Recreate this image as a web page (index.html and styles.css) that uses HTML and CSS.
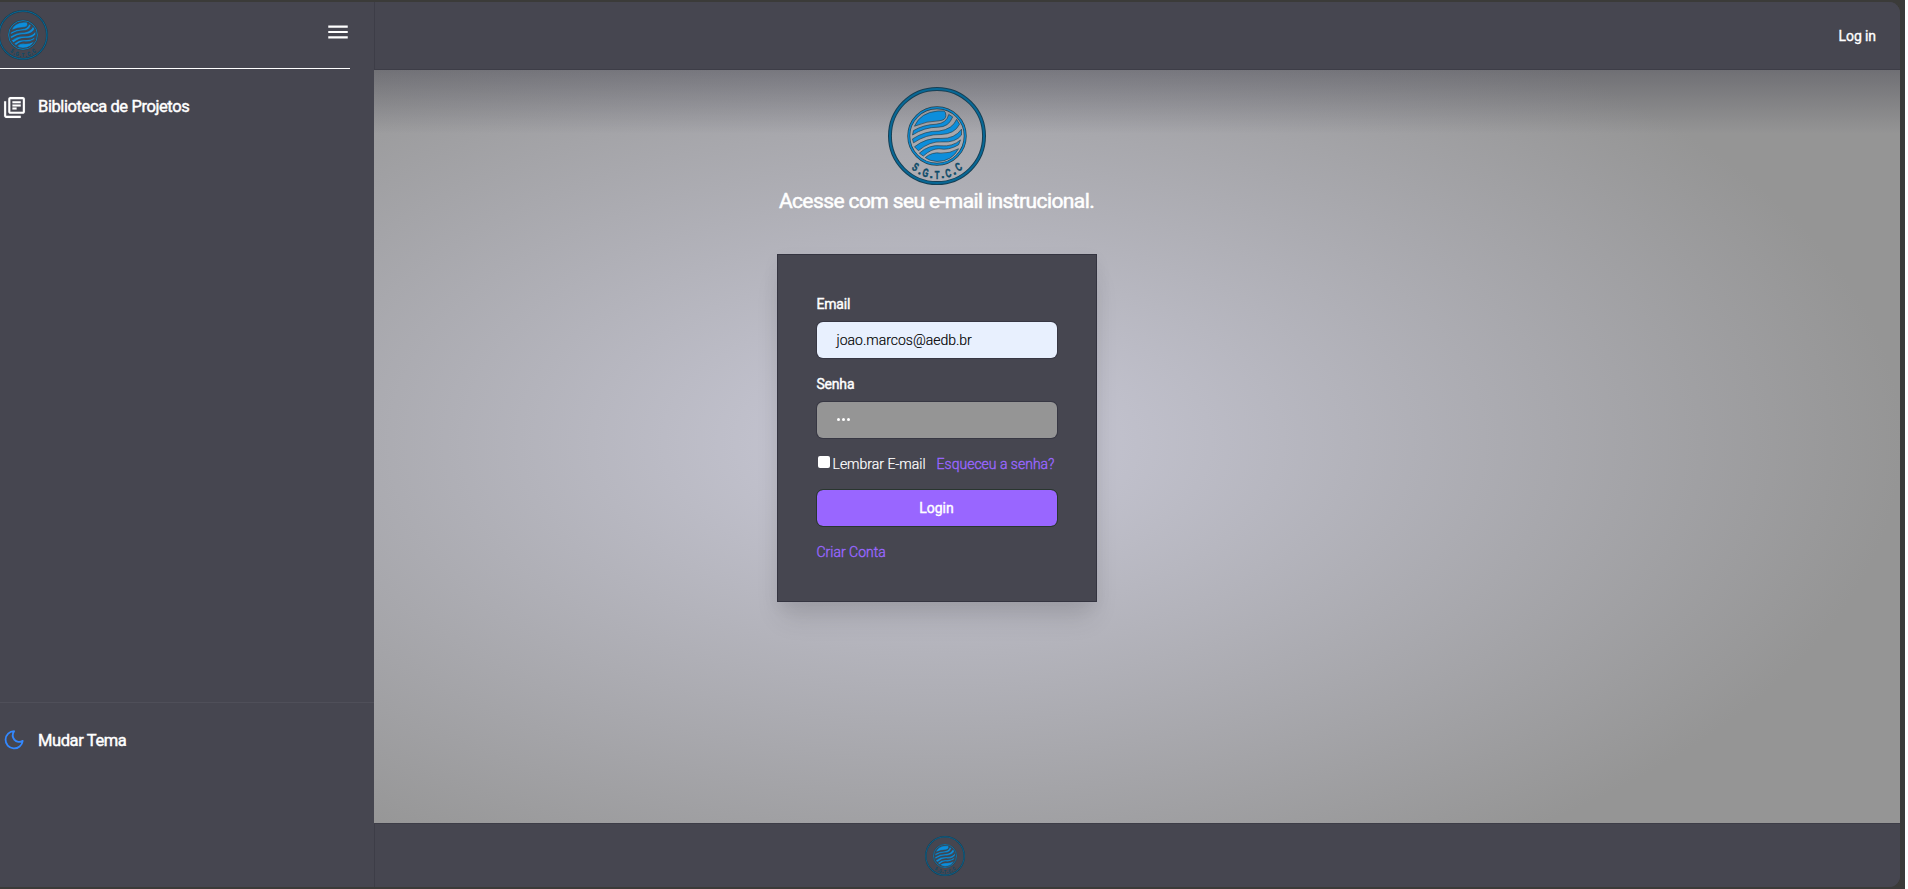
FILE: index.html
```html
<!DOCTYPE html>
<html lang="pt-BR">
<head>
<meta charset="utf-8">
<title>SGTCC</title>
<link rel="stylesheet" href="styles.css">
</head>
<body>
<svg class="defs" width="0" height="0">
  <symbol id="logo" viewBox="0 0 100 100" overflow="visible">
    <circle cx="50" cy="50" r="48" fill="none" stroke="#173f54" stroke-width="4"/>
    <circle cx="50" cy="50" r="48" fill="none" stroke="#076896" stroke-width="2"/>
    <circle cx="50" cy="50" r="28.800" fill="none" stroke="#24404d" stroke-width="3"/>
    <circle cx="50" cy="50" r="28.800" fill="none" stroke="#0b85c9" stroke-width="1.700"/>
    <g fill="#0d8edb" stroke="#24404d" stroke-width=".7">
      <path d="M27 40Q33 26 51 24.500H57Q59 25 59 29Q59 34 52 34.500Q40 34.500 27 40Z"/>
      <path d="M62 28L66 30.500Q62 41 51 41Q37 41 25 49L26 44.500Q36 38.500 49 38Q60 37 62 28Z"/>
      <path d="M70 33L73 38Q68 48 54 48.500Q39 48 26 57L25 53Q38 44.500 52 45Q66 43 70 33Z"/>
      <path d="M75 43L75 49Q69 57 55 56Q43 55 31 65L27 61Q39 51.500 54 52.500Q68 53 75 43Z"/>
      <path d="M74 54L72 59Q62 65 52 63Q44 63 36 70.500L32 67.500Q42 58.500 54 60Q66 61 74 54Z"/>
      <path d="M72 63Q65 76 50 76Q42 75.500 38 72Q45 66 54 67.500Q63 68 72 63Z"/>
    </g>
    <g class="logo-text">
      <text transform="translate(26 85) rotate(32) scale(.65 1)">S</text>
      <text transform="translate(31.500 89) rotate(24)">.</text>
      <text transform="translate(37.500 91.500) rotate(14) scale(.65 1)">G</text>
      <text transform="translate(44 93)">.</text>
      <text transform="translate(50 94) scale(.65 1)">T</text>
      <text transform="translate(56 93)">.</text>
      <text transform="translate(62.500 92) rotate(-14) scale(.65 1)">C</text>
      <text transform="translate(68.500 89) rotate(-24)">.</text>
      <text transform="translate(74 85) rotate(-32) scale(.65 1)">C</text>
    </g>
  </symbol>
</svg>
<div class="app">
  <aside class="sidebar">
    <div class="brand">
      <svg class="brand-logo"><use href="#logo"/></svg>
      <svg class="menu" viewBox="0 0 24 24"><path fill="#fff" d="M3 18h18v-2H3v2zm0-5h18v-2H3v2zm0-7v2h18V6H3z"/></svg>
    </div>
    <nav class="links">
      <a class="item">
        <svg class="icon-library" viewBox="0 0 24 24"><path fill="#fff" stroke="#fff" stroke-width=".1" d="M4 6H2v14c0 1.100.9 2 2 2h14v-2H4V6zm16-4H8c-1.100 0-2 .9-2 2v12c0 1.100.9 2 2 2h12c1.100 0 2-.9 2-2V4c0-1.100-.9-2-2-2zm0 14H8V4h12v12zM10 9h8v2h-8V9zm0 3h4v2h-4v-2zm0-6h8v2h-8V6z"/></svg>
        <span>Biblioteca de Projetos</span>
      </a>
    </nav>
    <div class="theme">
      <a class="item">
        <svg class="icon-moon" viewBox="0 0 20 20"><path fill="none" stroke="#3388ff" stroke-width="1.800" stroke-linejoin="round" d="M10.100 1.200A8.600 8.600 0 1 0 18.700 10.800A6.200 6.200 0 0 1 10.300 9.600A7.200 7.200 0 0 1 10.100 1.200Z"/></svg>
        <span>Mudar Tema</span>
      </a>
    </div>
  </aside>
  <div class="page">
    <header class="topbar"><a>Log in</a></header>
    <main class="main">
      <svg class="main-logo"><use href="#logo"/></svg>
      <h1 class="title">Acesse com seu e-mail instrucional.</h1>
      <form class="card">
        <label class="label">Email</label>
        <div class="field field-email">joao.marcos@aedb.br</div>
        <label class="label">Senha</label>
        <div class="field field-password"><i></i><i></i><i></i></div>
        <div class="options">
          <span class="checkbox"></span><span class="remember">Lembrar E-mail</span>
          <a class="link">Esqueceu a senha?</a>
        </div>
        <button class="submit" type="button">Login</button>
        <a class="link">Criar Conta</a>
      </form>
    </main>
    <footer class="footer"><svg class="footer-logo"><use href="#logo"/></svg></footer>
  </div>
</div>
</body>
</html>
```
FILE: styles.css
```css
* { box-sizing: border-box; }
html { background: #fff; }
body { margin: 0; width: 1905px; height: 889px; padding: 2px 5px 2px 0; background: #3b3b39; overflow: hidden; font-family: Roboto, "Liberation Sans", sans-serif; color: #fff; }
svg { overflow: visible; }
.defs { display: block; }
.app { display: flex; width: 1900px; height: 885px; background: #464650; border-radius: 0 11px 11px 0; overflow: hidden; }
.sidebar { flex: none; width: 374px; display: flex; flex-direction: column; }
.brand { display: flex; justify-content: space-between; width: 350px; height: 67px; border-bottom: 1px solid #fff; }
.brand-logo { width: 50px; height: 50px; margin: 8px 0 0 -2px; }
.menu { width: 26px; height: 26px; margin: 17px -1px 0 0; }
.links { flex: 1; padding-top: 24px; }
.item { display: flex; align-items: center; height: 26px; font-size: 16.500px; font-weight: 400; letter-spacing: -.4px; -webkit-text-stroke: .45px #fff; }
.icon-library { width: 25px; height: 25px; margin: 2px 11px 0 2px; }
.theme { height: 185px; border-top: 1px solid #4f4f59; padding-top: 24px; }
.icon-moon { width: 20px; height: 20px; margin: 0 14px 0 4px; }
.page { flex: 1; display: flex; flex-direction: column; }
.topbar { flex: none; height: 68px; display: flex; align-items: center; justify-content: flex-end; padding: 0 24px 0 0; background: #464650; border-left: 1px solid #3d3d47; border-bottom: 1px solid #3d3d47; font-size: 14px; font-weight: 400; letter-spacing: -.1px; -webkit-text-stroke: .35px #fff; }
.main { flex: 1; display: flex; flex-direction: column; align-items: center; padding: 17px 401px 0 0; background: linear-gradient(rgba(35, 35, 50, .33), rgba(35, 35, 45, 0) 64px), radial-gradient(ellipse 965px 490px at 563px 372px, #cacad8 0%, #959595 100%); }
.main-logo { width: 98px; height: 98px; flex: none; }
.title { margin: 2px 0 0; height: 28px; font-size: 21px; line-height: 28px; font-weight: 400; letter-spacing: -.6px; -webkit-text-stroke: .5px #fff; white-space: nowrap; }
.card { width: 320px; height: 348px; margin-top: 39px; padding: 38px 39px; background: #464650; border: 1px solid #343440; box-shadow: 0 20px 25px -5px rgba(0, 0, 0, .12), 0 5px 16px rgba(0, 0, 0, .05); font-size: 14px; display: flex; flex-direction: column; }
.label { height: 20px; line-height: 22px; font-weight: 400; letter-spacing: -.2px; -webkit-text-stroke: .4px #fff; margin-bottom: 9px; }
.field { height: 36px; border-radius: 6px; padding: 0 20px 1px; display: flex; align-items: center; margin-bottom: 15px; box-shadow: 0 0 0 1px #373743; }
.field-email { background: #e8f0fe; color: #000; font-weight: 300; -webkit-text-stroke: .15px #000; }
.field-password { background: #959595; gap: 2px; }
.field-password i { width: 3px; height: 3px; border-radius: 50%; background: #fff; }
.options { display: flex; height: 20px; line-height: 22px; margin: 0 0 17px; font-weight: 300; white-space: nowrap; -webkit-text-stroke: .2px; }
.checkbox { width: 12px; height: 12px; background: #fff; border-radius: 2px; margin: 3px 3px 0 1px; }
.remember { margin-right: 11px; }
.link { color: #9966ff; font-weight: 300; line-height: 22px; -webkit-text-stroke: .35px #9966ff; }
.submit { height: 36px; flex: none; border: 0; border-radius: 6px; outline: 1px solid #29362f; background: #9966ff; color: #fff; font: 400 14px Roboto, "Liberation Sans", sans-serif; -webkit-text-stroke: .4px #fff; padding: 0; margin-bottom: 15px; }
.footer { flex: none; height: 64px; display: flex; justify-content: center; padding: 12px 385px 0 0; background: #464650; border-left: 1px solid #3d3d47; border-top: 1px solid #3d3d47; }
.footer-logo { width: 40px; height: 40px; }
.logo-text { fill: #0c4a68; stroke: #0c4a68; stroke-width: .5; font: bold 12px "Liberation Sans", sans-serif; text-anchor: middle; }
```
